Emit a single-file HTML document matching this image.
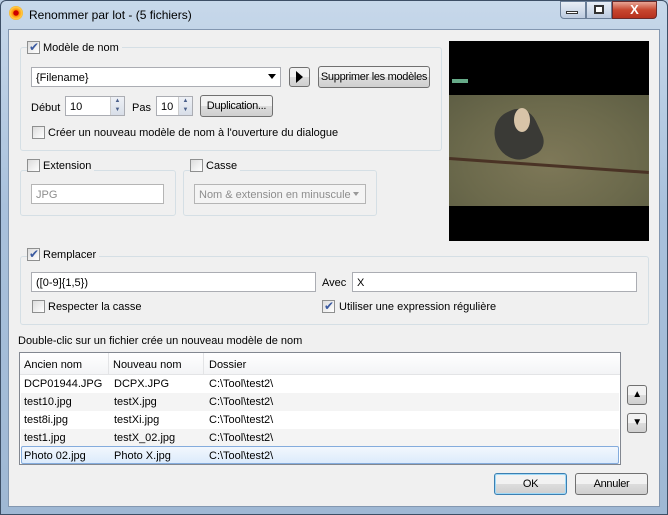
<!DOCTYPE html><html><head><meta charset="utf-8"><style>
*{box-sizing:border-box;margin:0;padding:0}
body{width:668px;height:515px;overflow:hidden;font-family:"Liberation Sans",sans-serif;font-size:11px;color:#000;background:#b9cde3;position:relative}
.a{position:absolute;white-space:nowrap}
.frame{left:0;top:0;width:668px;height:515px;background:linear-gradient(#c7d8ea,#a9c1dc 40%,#9fb8d4);border:1px solid #3d4f66;border-radius:6px 6px 0 0}
.client{left:8px;top:29px;width:652px;height:478px;background:#f0f0f0;border:1px solid #8397b0}
.grp{border:1px solid #d5dfe5;border-radius:3px}
.inp{background:#fff;border:1px solid #abadb3;height:20px;padding:4px 4px 0;white-space:nowrap}
.btn{border:1px solid #707070;border-radius:3px;background:linear-gradient(#f2f2f2 50%,#dddddd 50%,#cfcfcf);text-align:center;line-height:20px;height:21px;white-space:nowrap;letter-spacing:-0.3px}
.cb{width:13px;height:13px;border:1px solid #8e8f8f;background:linear-gradient(135deg,#dcdcdc,#fff)}
.cb.on::after{content:"✔";position:absolute;left:1px;top:-2px;font-size:12px;color:#3b5aa0}
.lab{background:#f0f0f0;padding:0 3px;white-space:nowrap}
.dis{color:#8d8d8d}
.row{position:absolute;left:1px;width:598px;height:18px;line-height:19px}
.row span{position:absolute}
</style></head><body>
<div class="a frame"></div>
<div class="a" style="left:9px;top:6px;width:14px;height:14px;border-radius:50%;background:radial-gradient(#c00 25%,#f80 30%,#fc4 60%,#c60)"></div>
<div class="a" style="left:29px;top:8px;font-size:12px">Renommer par lot - (5 fichiers)</div>
<div class="a" style="left:560px;top:1px;width:26px;height:18px;border:1px solid #6b7f99;border-radius:0 0 0 4px;background:linear-gradient(#e8eef6,#bccbe0)"></div>
<div class="a" style="left:566px;top:11px;width:12px;height:3px;background:#fff;border:1px solid #333"></div>
<div class="a" style="left:586px;top:1px;width:26px;height:18px;border:1px solid #6b7f99;background:linear-gradient(#e8eef6,#bccbe0)"></div>
<div class="a" style="left:594px;top:5px;width:10px;height:9px;border:2px solid #333;background:#fff"></div>
<div class="a" style="left:612px;top:1px;width:45px;height:18px;border:1px solid #6b2a2a;border-radius:0 0 4px 0;background:linear-gradient(#e8a595,#c7462f 50%,#b6301e);color:#fff;font-weight:bold;text-align:center;font-size:13px;line-height:16px">X</div>
<div class="a client"></div>

<div class="a grp" style="left:20px;top:47px;width:422px;height:104px"></div>
<div class="a cb on" style="left:27px;top:41px"></div>
<div class="a lab" style="left:40px;top:42px">Modèle de nom</div>
<div class="a inp" style="left:31px;top:67px;width:250px">{Filename}</div>
<div class="a" style="left:268px;top:74px;border:4px solid transparent;border-top:5px solid #000"></div>
<div class="a btn" style="left:289px;top:67px;width:21px;height:20px"></div>
<div class="a" style="left:296px;top:71px;border:6px solid transparent;border-left:7px solid #000;border-right:0"></div>
<div class="a btn" style="left:318px;top:66px;width:112px;height:22px">Supprimer les modèles</div>
<div class="a" style="left:31px;top:102px">Début</div>
<div class="a inp" style="left:65px;top:96px;width:60px">10</div>
<div class="a" style="left:110px;top:97px;width:14px;height:18px;background:linear-gradient(#eef1f6,#d8dee8);border-left:1px solid #ccc;font-size:6px;color:#4a5f8a;text-align:center;line-height:9px">▲<br>▼</div>
<div class="a" style="left:132px;top:102px">Pas</div>
<div class="a inp" style="left:156px;top:96px;width:37px">10</div>
<div class="a" style="left:178px;top:97px;width:14px;height:18px;background:linear-gradient(#eef1f6,#d8dee8);border-left:1px solid #ccc;font-size:6px;color:#4a5f8a;text-align:center;line-height:9px">▲<br>▼</div>
<div class="a btn" style="left:200px;top:95px;width:73px;height:22px">Duplication...</div>
<div class="a cb" style="left:32px;top:126px"></div>
<div class="a" style="left:48px;top:127px">Créer un nouveau modèle de nom à l'ouverture du dialogue</div>

<div class="a" style="left:449px;top:41px;width:200px;height:200px;background:#000"></div>
<div class="a" style="left:449px;top:95px;width:200px;height:111px;background:radial-gradient(ellipse at 50% 60%,#7e7858,#6c6a4c 60%,#5e5e44)"></div>
<div class="a" style="left:452px;top:79px;width:16px;height:4px;background:#6a8"></div>
<div class="a" style="left:495px;top:110px;width:45px;height:50px;border-radius:50% 40% 30% 50%;background:#3a3a36;transform:rotate(-25deg)"></div>
<div class="a" style="left:514px;top:108px;width:16px;height:24px;border-radius:50%;background:#d8c4a8"></div>
<div class="a" style="left:449px;top:164px;width:200px;height:3px;background:#4a3325;transform:rotate(4deg)"></div>

<div class="a grp" style="left:20px;top:170px;width:156px;height:46px"></div>
<div class="a cb" style="left:27px;top:159px"></div>
<div class="a lab" style="left:40px;top:160px">Extension</div>
<div class="a inp dis" style="left:31px;top:184px;width:133px;border-color:#b5b5b5">JPG</div>
<div class="a grp" style="left:183px;top:170px;width:194px;height:46px"></div>
<div class="a cb" style="left:190px;top:159px"></div>
<div class="a lab" style="left:203px;top:160px">Casse</div>
<div class="a inp dis" style="left:194px;top:184px;width:172px;border-color:#b5b5b5;background:#f4f4f4">Nom &amp; extension en minuscule</div>
<div class="a" style="left:353px;top:192px;border:3px solid transparent;border-top:4px solid #999"></div>

<div class="a grp" style="left:20px;top:256px;width:629px;height:69px"></div>
<div class="a cb on" style="left:27px;top:248px"></div>
<div class="a lab" style="left:40px;top:249px">Remplacer</div>
<div class="a inp" style="left:31px;top:272px;width:285px">([0-9]{1,5})</div>
<div class="a" style="left:322px;top:277px">Avec</div>
<div class="a inp" style="left:352px;top:272px;width:285px">X</div>
<div class="a cb" style="left:32px;top:300px"></div>
<div class="a" style="left:48px;top:301px">Respecter la casse</div>
<div class="a cb on" style="left:322px;top:300px"></div>
<div class="a" style="left:339px;top:301px">Utiliser une expression régulière</div>

<div class="a" style="left:18px;top:335px">Double-clic sur un fichier crée un nouveau modèle de nom</div>
<div class="a" style="left:19px;top:352px;width:602px;height:113px;background:#fff;border:1px solid #828790">
<div class="a" style="left:0;top:0;width:600px;height:22px;background:linear-gradient(#fff,#f3f4f6);border-bottom:1px solid #e3e4e6"></div>
<div class="a" style="left:88px;top:0;width:1px;height:22px;background:#e3e4e6"></div>
<div class="a" style="left:183px;top:0;width:1px;height:22px;background:#e3e4e6"></div>
<div class="a" style="left:4px;top:6px">Ancien nom</div><div class="a" style="left:93px;top:6px">Nouveau nom</div><div class="a" style="left:189px;top:6px">Dossier</div>
<div class="row" style="top:22px"><span style="left:3px">DCP01944.JPG</span><span style="left:93px">DCPX.JPG</span><span style="left:188px">C:\Tool\test2\</span></div>
<div class="row" style="top:40px;background:#f4f4f4"><span style="left:3px">test10.jpg</span><span style="left:93px">testX.jpg</span><span style="left:188px">C:\Tool\test2\</span></div>
<div class="row" style="top:58px"><span style="left:3px">test8i.jpg</span><span style="left:93px">testXi.jpg</span><span style="left:188px">C:\Tool\test2\</span></div>
<div class="row" style="top:76px;background:#f4f4f4"><span style="left:3px">test1.jpg</span><span style="left:93px">testX_02.jpg</span><span style="left:188px">C:\Tool\test2\</span></div>
<div class="row" style="top:93px;height:18px;background:linear-gradient(#f2f7fd,#dcebfc);border:1px solid #84acdd;border-radius:2px"><span style="left:2px;top:0">Photo 02.jpg</span><span style="left:92px;top:0">Photo X.jpg</span><span style="left:187px;top:0">C:\Tool\test2\</span></div>
</div>
<div class="a btn" style="left:627px;top:385px;width:20px;height:20px;font-size:10px;line-height:18px">▲</div>
<div class="a btn" style="left:627px;top:413px;width:20px;height:20px;font-size:10px;line-height:18px">▼</div>
<div class="a btn" style="left:494px;top:473px;width:73px;height:22px;border-color:#3c7fb1;box-shadow:inset 0 0 0 1px #9fd9f7">OK</div>
<div class="a btn" style="left:575px;top:473px;width:73px;height:22px">Annuler</div>
</body></html>
